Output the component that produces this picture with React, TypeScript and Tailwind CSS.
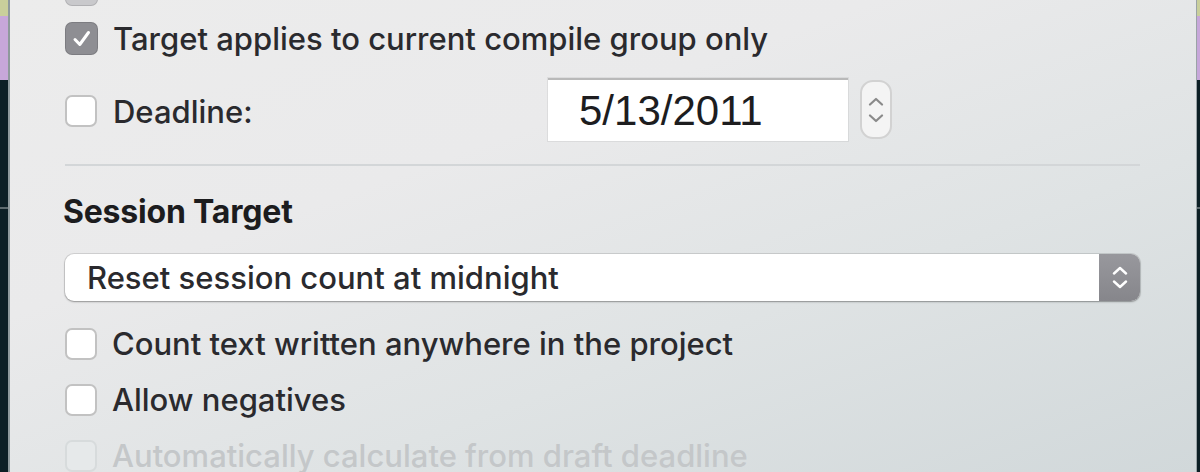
import React from "react";

const FONT = "font-['Inter','Liberation_Sans',Arial,sans-serif]";

function Check({ checked = false, disabled = false, faded = false }: { checked?: boolean; disabled?: boolean; faded?: boolean }) {
  if (checked) {
    return (
      <div className={`w-[33px] h-[33px] shrink-0 rounded-[7px] flex items-center justify-center ${faded ? "bg-[#c9c9cc]" : "bg-[#8e8e93]"} shadow-[inset_0_0_0_1px_rgba(0,0,0,0.12)]`}>
        {!faded && (
          <svg width="24" height="24" viewBox="0 0 24 24" fill="none">
            <path d="M5 12.5 L9.8 17.5 L18.5 5.5" stroke="white" strokeWidth="3" strokeLinecap="round" strokeLinejoin="round" />
          </svg>
        )}
      </div>
    );
  }
  return (
    <div
      className={`w-[32px] h-[32px] shrink-0 rounded-[7px] border-2 ${
        disabled ? "border-[#d7dbdc] bg-[#e6e9ea]" : "border-[#c2c2c2] bg-white"
      }`}
    />
  );
}

function Row({
  label,
  checked,
  disabled,
  faded,
  className = "",
  labelClass = "",
}: {
  label: string;
  checked?: boolean;
  disabled?: boolean;
  faded?: boolean;
  className?: string;
  labelClass?: string;
}) {
  return (
    <div className={`flex items-center h-[33px] ${className}`}>
      <Check checked={checked} disabled={disabled} faded={faded} />
      <span
        className={`ml-[15px] text-[31px] font-medium leading-none tracking-[0px] whitespace-nowrap ${
          disabled ? "text-[#c4c7c9]" : "text-[#2a2a2e]"
        } ${labelClass}`}
      >
        {label}
      </span>
    </div>
  );
}

export default function App() {
  return (
    <div className={`w-[1200px] h-[472px] overflow-hidden flex bg-[#0c1f25] ${FONT}`}>
      {/* left desktop strip */}
      <div className="w-[8px] flex flex-col shrink-0">
        <div className="h-[16px] bg-[#c9cf9b]" />
        <div className="h-[64px] bg-[#c7a7da]" />
        <div className="h-[127px] bg-[#0c1f25]" />
        <div className="h-[2px] bg-[#5d6a6e]" />
        <div className="flex-1 bg-[#0c1f25]" />
      </div>
      <div className="w-[2px] shrink-0 bg-[#8e999c]" />
      {/* panel */}
      <div className="flex-1 flex flex-col pl-[55px] pr-[56px] bg-[linear-gradient(160deg,#ececec_0%,#eaeaeb_35%,#dfe3e4_65%,#d1d8da_100%)]">
        <Row
          label="Count text in documents excluded from compile"
          checked
          faded
          className="mt-[-27px]"
          labelClass="mt-[-22px] text-[#bdbdbd]"
        />
        <Row label="Target applies to current compile group only" checked className="mt-[16px]" />
        <div className="mt-[23px] h-[63px] flex items-center">
          <div className="w-[483px] flex items-center mt-[3px]">
            <Check />
            <span className="ml-[16px] text-[31px] font-medium leading-none text-[#2a2a2e]">Deadline:</span>
          </div>
          <div className="w-[300px] h-[63px] bg-white border-t-2 border-[#b9b9b9] shadow-[0_0_0_1px_rgba(0,0,0,0.06)] flex items-center pl-[31px]">
            <span className="text-[42px] leading-none text-[#1d1d1f] font-['Liberation_Sans',Arial,sans-serif]">5/13/2011</span>
          </div>
          <div className="ml-[12px] w-[32px] h-[59px] rounded-[13px] border-2 border-[#d2d2d2] bg-[#f4f4f4] flex flex-col items-center justify-center gap-[8px]">
            <svg width="16" height="9" viewBox="0 0 16 9" fill="none">
              <path d="M2 7.5 L8 2 L14 7.5" stroke="#8a8a8a" strokeWidth="2.2" strokeLinecap="round" strokeLinejoin="round" />
            </svg>
            <svg width="16" height="9" viewBox="0 0 16 9" fill="none">
              <path d="M2 1.5 L8 7 L14 1.5" stroke="#8a8a8a" strokeWidth="2.2" strokeLinecap="round" strokeLinejoin="round" />
            </svg>
          </div>
        </div>
        <div className="mt-[23px] h-[2px] bg-[#d3d6d8]" />
        <div className="mt-[28px] h-[36px] flex items-center">
          <span className="ml-[-2px] text-[32px] font-bold leading-none tracking-[-0.2px] text-[#1c1c1e]">Session Target</span>
        </div>
        <div className="mt-[24px] h-[47px] flex rounded-[9px] bg-white shadow-[0_1px_2px_rgba(0,0,0,0.3),0_0_0_1px_rgba(0,0,0,0.1)] overflow-hidden">
          <div className="flex-1 flex items-center pl-[22px]">
            <span className="text-[31px] font-medium leading-none text-[#2a2a2e]">Reset session count at midnight</span>
          </div>
          <div className="w-[41px] bg-[linear-gradient(180deg,#98989d,#86868b)] flex flex-col items-center justify-center gap-[5px]">
            <svg width="16" height="9" viewBox="0 0 16 9" fill="none">
              <path d="M2 7.5 L8 2 L14 7.5" stroke="white" strokeWidth="2.4" strokeLinecap="round" strokeLinejoin="round" />
            </svg>
            <svg width="16" height="9" viewBox="0 0 16 9" fill="none">
              <path d="M2 1.5 L8 7 L14 1.5" stroke="white" strokeWidth="2.4" strokeLinecap="round" strokeLinejoin="round" />
            </svg>
          </div>
        </div>
        <Row label="Count text written anywhere in the project" className="mt-[27px]" />
        <Row label="Allow negatives" className="mt-[23px]" />
        <Row label="Automatically calculate from draft deadline" disabled className="mt-[23px]" />
      </div>
      <div className="w-[1px] shrink-0 bg-[#9aa3a6]" />
      {/* right desktop strip */}
      <div className="w-[3px] flex flex-col shrink-0">
        <div className="h-[16px] bg-[#c9cf9b]" />
        <div className="h-[64px] bg-[#c7a7da]" />
        <div className="h-[127px] bg-[#0c1f25]" />
        <div className="h-[2px] bg-[#5d6a6e]" />
        <div className="flex-1 bg-[#0c1f25]" />
      </div>
    </div>
  );
}
